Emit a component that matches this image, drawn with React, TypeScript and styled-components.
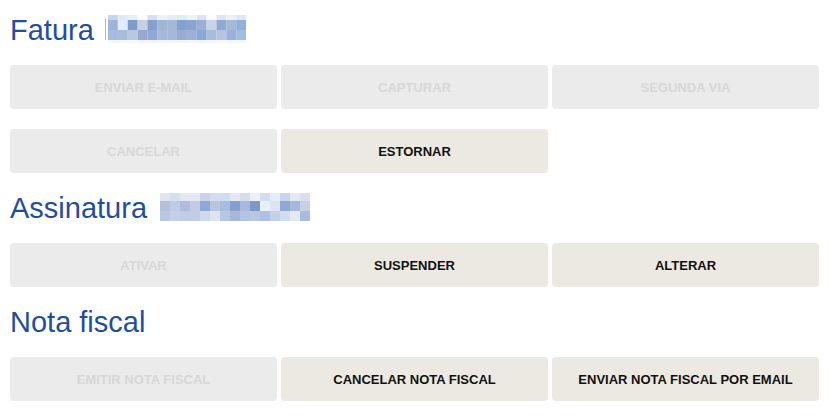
import React from "react";
import styled, { createGlobalStyle } from "styled-components";

const GlobalStyle = createGlobalStyle`
    html, body {
        margin: 0;
        padding: 0;
        background: #ffffff;
        font-family: "Liberation Sans", Arial, Helvetica, sans-serif;
    }
`;

const Page = styled.div`
    width: 809px;
    padding: 13px 0 0 10px;
    display: flex;
    flex-direction: column;
    gap: 18px;
`;

const Section = styled.section`
    display: flex;
    flex-direction: column;
`;

const Title = styled.h2`
    margin: 0 0 18px 0;
    font-size: 29px;
    line-height: 34px;
    font-weight: 400;
    color: #1f4e9e;
    white-space: nowrap;
`;

const Actions = styled.div`
    display: grid;
    grid-template-columns: repeat(3, 1fr);
    column-gap: 4px;
    row-gap: 20px;
`;

const ActionButton = styled.button`
    height: 44px;
    border: none;
    border-radius: 4px;
    background: #ece9e2;
    color: #111111;
    font-family: "Liberation Sans", Arial, Helvetica, sans-serif;
    font-size: 13px;
    font-weight: 700;
    text-transform: uppercase;
    cursor: pointer;
    padding: 1px 8px 0 8px;

    &:disabled {
        background: #ebebeb;
        color: #d7d7d7;
        cursor: default;
    }
`;

interface BlurProps {
    $left: number;
}
const Blur = styled.svg<BlurProps>`
    display: inline-block;
    vertical-align: -3px;
    margin-left: ${props => props.$left}px;
`;

// pixelated (censored) names next to the titles
const faturaRows = {
    heights: [5, 10, 10, 3],
    colors: [
        ["c8d4e8", "e0e8f4", "e8eef8", "fafcff", "d8e0f0", "eef2fa", "e4eaf6", "e4eaf4", "f0f4fa", "dce4f2", "fcfdff", "e0e6f4", "ecf0f8", "e0e6f2"],
        ["9cb4d8", "e4ecf8", "7c9ccc", "c8d0e4", "84a0cc", "a0b4d8", "a4b8d8", "84a0cc", "88a4d0", "9cb0d4", "c8d4e8", "8caad4", "a4b8d8", "94b0d8"],
        ["a4bce0", "a8bcdc", "b8c8e0", "98a8d0", "90a8d4", "a4b8dc", "a4b8dc", "98acd4", "9cb0d8", "8ca8d4", "a8bcdc", "b4c4e0", "9cb0d8", "a4bce0"],
        ["f4f6fb", "f4f6fb", "f6f8fc", "f2f4fa", "f2f4fa", "f4f6fb", "f4f6fb", "f2f4fa", "f4f6fb", "f2f4fa", "f4f6fb", "f6f8fc", "f4f6fb", "f4f6fb"],
    ],
};

const assinaturaRows = {
    heights: [8, 10, 10],
    colors: [
        ["e0e4f0", "d4e0f0", "e4e8f4", "e4e8f4", "c8d4ec", "d4dcf0", "d0dcf0", "e4e8f4", "d4dcf0", "eef0f8", "d0dcf0", "e4ecf8", "c8d4ec", "e4e8f4", "d8e0f0"],
        ["b4c0dc", "c0cce4", "b0bcdc", "c4cce4", "90a8d4", "b8c4e0", "a8bcdc", "88a0cc", "a8b8d8", "7c98c8", "e8f0fa", "e0e4f0", "90a8d4", "a8b8dc", "c8d0e4"],
        ["b8c8e4", "c4d0e8", "c0cce4", "c4cce4", "d0d8ec", "e0e4f0", "b4c8e4", "a8b8d8", "b4c4e0", "b8c8e4", "b0c0e0", "c4d0e8", "d4dcf0", "e4e8f4", "a8bcdc"],
    ],
};

type Pixels = { heights: number[]; colors: string[][] };

function Pixelated({ data, cell, left, caret }: { data: Pixels; cell: number; left: number; caret?: boolean }) {
    const offset = caret ? 3 : 0;
    const cols = data.colors[0].length;
    const width = offset + cols * cell;
    const height = data.heights.reduce((a, b) => a + b, 0);
    let y = 0;
    return (
        <Blur $left={left} width={width} height={height} viewBox={`0 0 ${width} ${height}`}>
            {caret && <rect x={0} y={4} width={1} height={height - 7} fill="#e2a4a0" />}
            {data.colors.map((row, r) => {
                const top = y;
                y += data.heights[r];
                return row.map((c, i) => (
                    <rect key={`${r}-${i}`} x={offset + i * cell} y={top} width={cell + 0.05} height={data.heights[r]} fill={`#${c}`} />
                ));
            })}
        </Blur>
    );
}

type Action = { label: string; enabled?: boolean };

const sections: { title: string; blur?: "fatura" | "assinatura"; actions: Action[] }[] = [
    {
        title: "Fatura",
        blur: "fatura",
        actions: [
            { label: "Enviar e-mail" },
            { label: "Capturar" },
            { label: "Segunda via" },
            { label: "Cancelar" },
            { label: "Estornar", enabled: true },
        ],
    },
    {
        title: "Assinatura",
        blur: "assinatura",
        actions: [
            { label: "Ativar" },
            { label: "Suspender", enabled: true },
            { label: "Alterar", enabled: true },
        ],
    },
    {
        title: "Nota fiscal",
        actions: [
            { label: "Emitir nota fiscal" },
            { label: "Cancelar nota fiscal", enabled: true },
            { label: "Enviar nota fiscal por email", enabled: true },
        ],
    },
];

export default function App() {
    return (
        <>
            <GlobalStyle />
            <Page>
                {sections.map(s => (
                    <Section key={s.title}>
                        <Title>
                            {s.title}
                            {s.blur && " "}
                            {s.blur === "fatura" && <Pixelated data={faturaRows} cell={9.86} left={3} caret />}
                            {s.blur === "assinatura" && <Pixelated data={assinaturaRows} cell={10} left={5} />}
                        </Title>
                        <Actions>
                            {s.actions.map(a => (
                                <ActionButton key={a.label} disabled={!a.enabled}>
                                    {a.label}
                                </ActionButton>
                            ))}
                        </Actions>
                    </Section>
                ))}
            </Page>
        </>
    );
}
